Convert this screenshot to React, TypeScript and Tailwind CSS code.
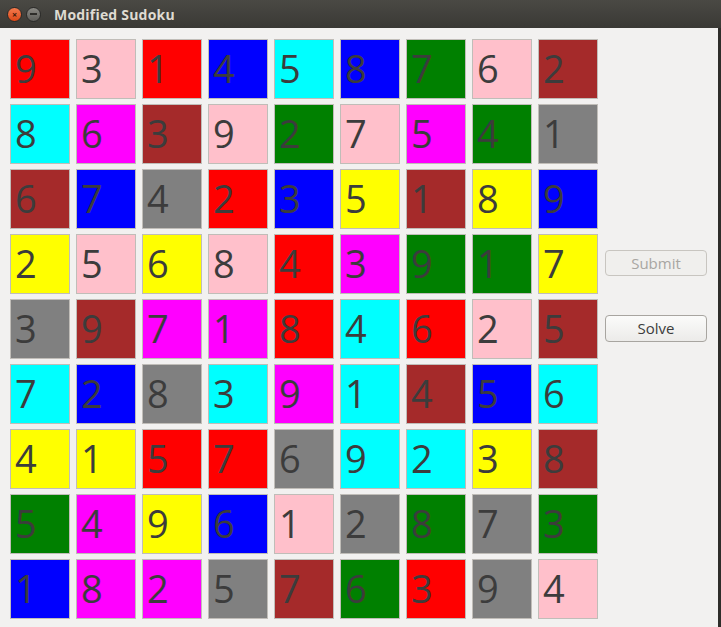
import React from "react";

const C: Record<string, string> = {
  r: "bg-[#ff0000]",
  p: "bg-[#ffc0cb]",
  b: "bg-[#0000ff]",
  c: "bg-[#00ffff]",
  g: "bg-[#008000]",
  n: "bg-[#a52a2a]",
  m: "bg-[#ff00ff]",
  a: "bg-[#808080]",
  y: "bg-[#ffff00]",
};

const rows: [string, number][][] = [
  [["r", 9], ["p", 3], ["r", 1], ["b", 4], ["c", 5], ["b", 8], ["g", 7], ["p", 6], ["n", 2]],
  [["c", 8], ["m", 6], ["n", 3], ["p", 9], ["g", 2], ["p", 7], ["m", 5], ["g", 4], ["a", 1]],
  [["n", 6], ["b", 7], ["a", 4], ["r", 2], ["b", 3], ["y", 5], ["n", 1], ["y", 8], ["b", 9]],
  [["y", 2], ["p", 5], ["y", 6], ["p", 8], ["r", 4], ["m", 3], ["g", 9], ["g", 1], ["y", 7]],
  [["a", 3], ["n", 9], ["m", 7], ["m", 1], ["r", 8], ["c", 4], ["r", 6], ["p", 2], ["n", 5]],
  [["c", 7], ["b", 2], ["a", 8], ["c", 3], ["m", 9], ["c", 1], ["n", 4], ["b", 5], ["c", 6]],
  [["y", 4], ["y", 1], ["r", 5], ["r", 7], ["a", 6], ["c", 9], ["c", 2], ["y", 3], ["n", 8]],
  [["g", 5], ["m", 4], ["y", 9], ["b", 6], ["p", 1], ["a", 2], ["g", 8], ["a", 7], ["g", 3]],
  [["b", 1], ["m", 8], ["m", 2], ["a", 5], ["n", 7], ["g", 6], ["r", 3], ["a", 9], ["p", 4]],
];

export default function App() {
  return (
    <div
      className="w-[721px] h-[627px] overflow-hidden bg-[#f2f1f0] flex flex-col"
      style={{ fontFamily: '"Open Sans", "Noto Sans", sans-serif' }}
    >
      <div className="h-[28px] shrink-0 bg-gradient-to-b from-[#4a4944] to-[#3a3935] flex items-center">
        <div className="ml-[7px] w-[15px] h-[15px] rounded-full bg-gradient-to-b from-[#f47a4c] to-[#dd4814] border border-[#2a2a28] flex items-center justify-center text-[#3a1a0a] text-[9px] font-bold leading-none">
          ×
        </div>
        <div className="ml-[4px] w-[15px] h-[15px] rounded-full bg-gradient-to-b from-[#8a8984] to-[#5f5e5a] border border-[#2a2a28] flex items-center justify-center">
          <div className="w-[7px] h-[1.5px] bg-[#2e2d2a]" />
        </div>
        <span className="ml-[13px] text-[14px] font-bold text-[#dfdbd2] tracking-[0.2px]">
          Modified Sudoku
        </span>
      </div>
      <div className="flex flex-1 border-r-[3px] border-[#2e2d2a]">
        <div className="pl-[10px] pt-[11px] grid grid-cols-[repeat(9,60px)] auto-rows-[60px] gap-x-[6px] gap-y-[5px] content-start">
          {rows.flat().map(([col, d], i) => (
            <div
              key={i}
              className={`${C[col]} border border-[#c0bdb8] flex items-center pl-[4px] text-[38px] leading-none text-[#3c3c3c]`}
            >
              <span className="-mt-[2px]">{d}</span>
            </div>
          ))}
        </div>
        <div className="ml-[7px] pt-[222px] flex flex-col">
          <button className="w-[102px] h-[26px] rounded-[4px] border border-[#c8c5c0] bg-[#f0efed] text-[15px] text-[#a8a6a2] leading-none">
            Submit
          </button>
          <button className="mt-[39px] w-[102px] h-[27px] rounded-[4px] border border-[#a8a5a0] bg-gradient-to-b from-[#fbfbfa] to-[#ecebe9] text-[15px] text-[#3c3c3c] leading-none">
            Solve
          </button>
        </div>
      </div>
    </div>
  );
}
